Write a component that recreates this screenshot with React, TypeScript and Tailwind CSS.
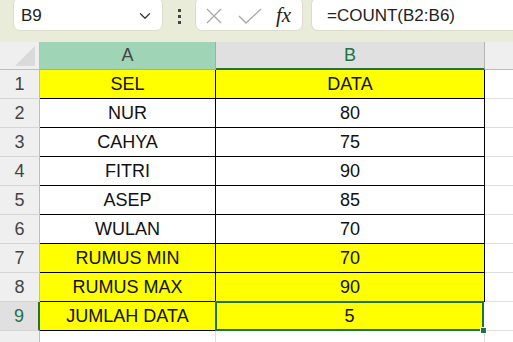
import { ChevronDown } from 'lucide-react';

type Row = { n: number; a: string; b: string; yellow?: boolean };

const rows: Row[] = [
  { n: 1, a: 'SEL', b: 'DATA', yellow: true },
  { n: 2, a: 'NUR', b: '80' },
  { n: 3, a: 'CAHYA', b: '75' },
  { n: 4, a: 'FITRI', b: '90' },
  { n: 5, a: 'ASEP', b: '85' },
  { n: 6, a: 'WULAN', b: '70' },
  { n: 7, a: 'RUMUS MIN', b: '70', yellow: true },
  { n: 8, a: 'RUMUS MAX', b: '90', yellow: true },
  { n: 9, a: 'JUMLAH DATA', b: '5', yellow: true },
];

function FormulaBar() {
  return (
    <div className="flex h-[42px] items-start bg-[#e8ecd9]">
      <div className="ml-[13px] -mt-[3px] flex h-[34px] w-[150px] items-center justify-between rounded-[7px] border border-[#dcdccf] bg-white pl-[7px] pr-[8px] pt-[3px] text-[17px] text-[#222]">
        <span>B9</span>
        <ChevronDown size={18} strokeWidth={1.6} className="text-[#333]" />
      </div>
      <div className="flex w-[32px] flex-col items-center gap-[3px] pt-[9px]">
        <span className="h-[3px] w-[3px] bg-[#444]" />
        <span className="h-[3px] w-[3px] bg-[#444]" />
        <span className="h-[3px] w-[3px] bg-[#444]" />
      </div>
      <div className="-mt-[3px] flex h-[34px] w-[108px] items-center rounded-[7px] border border-[#dcdccf] bg-white pl-[9px] pt-[3px]">
        <svg width="18" height="18" viewBox="0 0 18 18" className="text-[#a8a8a8]">
          <path d="M2 2 L16 16 M16 2 L2 16" stroke="currentColor" strokeWidth="1.3" fill="none" />
        </svg>
        <svg width="24" height="18" viewBox="0 0 24 18" className="ml-[15px] text-[#a8a8a8]">
          <path d="M1 9 L8 16 L23 2" stroke="currentColor" strokeWidth="1.3" fill="none" />
        </svg>
        <span className="ml-[14px] font-['Liberation_Serif',serif] text-[21px] italic leading-none text-[#222]">
          fx
        </span>
      </div>
      <div className="-mt-[3px] ml-[8px] flex h-[34px] flex-1 items-center rounded-l-[7px] border border-r-0 border-[#dcdccf] bg-white pl-[15px] pt-[3px] text-[17px] text-[#222]">
        =COUNT(B2:B6)
      </div>
    </div>
  );
}

function ColumnHeaders() {
  return (
    <div className="flex h-[28px] text-[18px]">
      <div className="relative w-[40px] border-r border-b border-[#bdbdbd] bg-[#efefef]">
        <svg width="20" height="20" viewBox="0 0 20 20" className="absolute right-[4px] bottom-[3px]">
          <path d="M20 0 L20 20 L0 20 Z" fill="#dadada" />
        </svg>
      </div>
      <div className="flex w-[176px] items-center justify-center border-r border-b border-[#a9a9a9] bg-[#9fd4b6] text-[#444]">
        A
      </div>
      <div className="flex w-[269px] items-center justify-center border-r border-[#b5b5b5] border-b-2 border-b-[#217346] bg-[#e0e0e0] text-[#217346]">
        B
      </div>
      <div className="flex-1 border-b border-[#bdbdbd] bg-[#efefef]" />
    </div>
  );
}

function SheetRow({ row }: { row: Row }) {
  const sel = row.n === 9;
  const fill = row.yellow ? 'bg-[#ffff00]' : 'bg-white';
  return (
    <div className="flex h-[29px] text-[18px] leading-none text-[#111]">
      <div
        className={`flex w-[40px] items-center justify-center border-b border-[#d4d4d4] text-[#444] ${
          sel ? 'border-r-2 border-r-[#217346] bg-[#e0e0e0] text-[#217346]' : 'border-r border-r-[#bdbdbd] bg-[#efefef]'
        }`}
      >
        {row.n}
      </div>
      <div className={`flex w-[176px] items-center justify-center border-r border-b border-black ${fill}`}>
        {row.a}
      </div>
      <div
        className={`relative flex w-[269px] items-center justify-center ${fill} ${
          sel ? 'border-2 border-[#217346] -ml-px -mt-px h-[30px]' : 'border-r border-b border-black'
        }`}
      >
        {row.b}
        {sel ? (
          <span className="absolute -right-[5px] -bottom-[5px] h-[7px] w-[7px] border border-white bg-[#217346]" />
        ) : null}
      </div>
      <div className="flex-1 border-b border-[#dedede] bg-white" />
    </div>
  );
}

export default function App() {
  return (
    <div className="h-[342px] w-[513px] overflow-hidden bg-white font-['Liberation_Sans',Arial,sans-serif]">
      <FormulaBar />
      <ColumnHeaders />
      {rows.map((r) => (
        <SheetRow key={r.n} row={r} />
      ))}
      <div className="flex h-[29px] text-[18px]">
        <div className="flex w-[40px] items-start justify-center border-r border-[#bdbdbd] bg-[#efefef] pt-[5px] text-[#444]">
          10
        </div>
        <div className="w-[176px] border-r border-[#dedede]" />
        <div className="w-[269px] border-r border-[#dedede]" />
        <div className="flex-1" />
      </div>
    </div>
  );
}
